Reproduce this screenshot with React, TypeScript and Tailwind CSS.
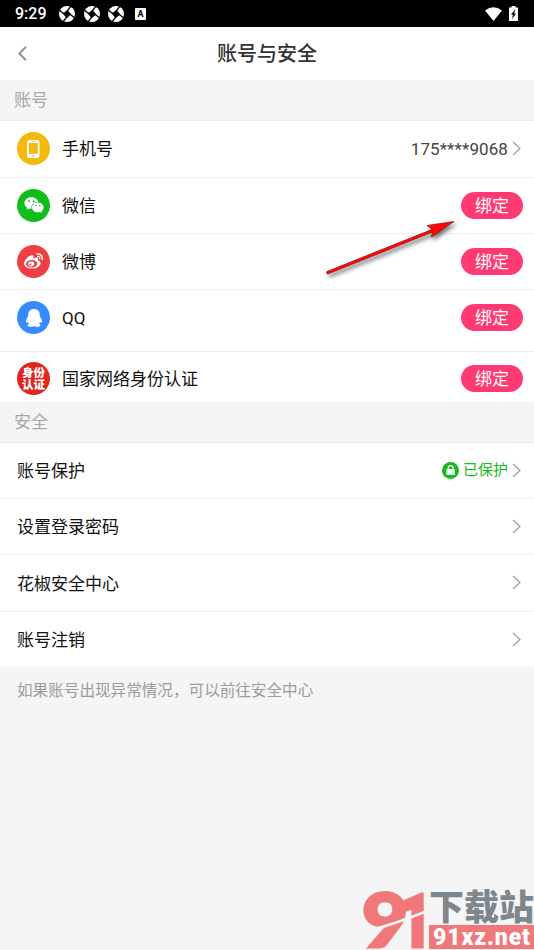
import type { ReactNode } from "react";
import { FaWeibo } from "react-icons/fa";
import { AiFillWechat } from "react-icons/ai";

const ApertureIcon = () => (
  <svg viewBox="0 0 16 16" className="w-4 h-4">
    <circle cx="8" cy="8" r="8" fill="#fff" />
    {[0, 90, 180, 270].map((angle) => (
      <path key={angle} d="M8 8 3.900 7.700 8.800 3.300 11.200 0 12.400.7 9.800 4z" fill="#000" transform={`rotate(${angle} 8 8)`} />
    ))}
  </svg>
);

const StatusBar = () => (
  <div className="flex items-center h-[27px] bg-black text-white pl-[15px] pr-[14px]">
    <span className="w-[44px] text-[16px] leading-[27px] font-medium font-['Roboto',sans-serif]">9:29</span>
    <div className="flex gap-[8.5px]">
      <ApertureIcon />
      <ApertureIcon />
      <ApertureIcon />
    </div>
    <span className="ml-[11px] w-[11px] h-3 rounded-[1px] bg-white text-black text-[9px] leading-3 text-center font-bold font-['Roboto',sans-serif]">A</span>
    <svg viewBox="0 0 17 14" className="ml-auto w-[17px] h-[14px]">
      <path d="M0 3.500Q8.500-3 17 3.500L8.500 14z" fill="#fff" />
    </svg>
    <svg viewBox="0 0 9 15" className="ml-[7px] mr-[2px] w-[9px] h-[15px]">
      <path d="M2.500 0h4v1.500H9V15H0V1.500h2.500z" fill="#fff" />
      <path d="M6.500 3 2 8.500h2L3 13l4-5.500H5z" fill="#000" />
    </svg>
  </div>
);

const Chevron = () => (
  <svg viewBox="0 0 9 15" className="w-[9px] h-[15px]" fill="none" stroke="#9d9d9f" strokeWidth="1.2">
    <path d="M1 1l7 6.500-7 6.500" />
  </svg>
);

const BindButton = () => (
  <button className="w-[62px] h-[27px] pt-px rounded-full bg-[#ff3a73] text-white text-[17px] leading-[26px]">绑定</button>
);

const PhoneIcon = () => (
  <svg viewBox="0 0 13 18" className="w-[13px] h-[18px]">
    <rect width="12.500" height="18" rx="2.200" fill="#fff" />
    <rect x="1.800" y="3" width="9" height="10.800" fill="#f5b80c" />
    <path d="M4.500 1.500h3.500" stroke="#f5b80c" strokeWidth=".7" />
    <circle cx="6.300" cy="15.900" r=".9" fill="#f5b80c" />
  </svg>
);

const PenguinIcon = () => (
  <svg viewBox="0 0 16 18" className="w-4 h-[18px]" fill="#fff">
    <path d="M8 0C4.600 0 2.200 2.400 2.200 5.700v1.500C1 8.800 0 10.800.1 12.900c.1 1.200 1.200.8 1.800-.2.300.9.600 1.500 1.200 2.100-1 .4-1.500.9-1.500 1.500 0 1.400 2.400 1.800 4.200 1.500 1-.1 1.700-.5 2.200-.9.500.4 1.200.8 2.200.9 1.800.3 4.200-.1 4.200-1.500 0-.6-.5-1.100-1.500-1.500.6-.6.9-1.200 1.200-2.100.6 1 1.700 1.400 1.800.2.100-2.100-.9-4.100-2.100-5.700V5.700C13.800 2.400 11.400 0 8 0z" />
  </svg>
);

const LockBadge = () => (
  <svg viewBox="0 0 17 17" className="w-[17px] h-[17px]">
    <circle cx="8.500" cy="8.500" r="8.500" fill="#11bd19" />
    <rect x="4.300" y="7" width="8.600" height="5.800" rx=".6" fill="#fff" />
    <path d="M6.200 7.500V6a2.400 2.400 0 0 1 4.800 0v1.500" fill="none" stroke="#fff" strokeWidth="1.300" />
  </svg>
);

const SectionTitle = ({ children }: { children: ReactNode }) => (
  <div className="h-[41px] bg-[#f5f5f5] border-b border-[#ebebeb] pl-[14px] text-[17px] leading-[41px] text-[#a7a7aa]">{children}</div>
);

const AccountRow = ({ icon, color, label, className, children }: {
  icon: ReactNode;
  color: string;
  label: string;
  className: string;
  children: ReactNode;
}) => (
  <div className={`flex items-center pl-[17px] pr-[11px] bg-white border-[#efefef] ${className}`}>
    <div className={`flex items-center justify-center w-[33px] h-[33px] rounded-full text-white ${color}`}>{icon}</div>
    <span className="ml-3 pt-px text-[17px] leading-6 text-[#111]">{label}</span>
    <div className="ml-auto flex items-center">{children}</div>
  </div>
);

const SafetyRow = ({ label, className, children }: { label: string; className: string; children?: ReactNode }) => (
  <div className={`flex items-center pl-[17px] pr-[13px] bg-white border-[#efefef] text-[17px] text-[#111] ${className}`}>
    <span className="pt-[3px]">{label}</span>
    <div className="ml-auto flex items-center pb-px">
      {children}
      <Chevron />
    </div>
  </div>
);

const Arrow = () => (
  <svg viewBox="0 0 140 66" className="absolute left-[322px] top-[216px] w-[140px] h-[66px] pointer-events-none overflow-visible">
    <g className="[filter:drop-shadow(2px_3px_2px_rgba(0,0,0,0.55))]">
      <path d="M6 56.500 112 14" stroke="#8a2020" strokeWidth="3.400" strokeLinecap="round" />
      <path d="M105 9.500 132 5.500 109.500 21 111 14z" fill="#fa0808" stroke="#8a2020" strokeWidth=".8" />
      <path d="M7 56.100 113 13.700" stroke="#fa0808" strokeWidth="2.500" strokeLinecap="round" />
    </g>
  </svg>
);

const Watermark = () => (
  <div className="absolute right-0 bottom-0 flex w-[171px] h-[60px]">
    <svg viewBox="0 0 66 60" className="w-[66px] h-[60px]">
      <g fill="#f0787b" stroke="#f0787b" strokeWidth="3" fontWeight="900">
        <text transform="translate(-1 57) scale(1.060 1)" fontSize="75" fontFamily="Lato, sans-serif">9</text>
        <text transform="translate(35 57) scale(.8 1)" fontSize="75" fontFamily="Roboto, sans-serif">1</text>
      </g>
      <path d="M5 41Q35 33 64 21" fill="none" stroke="#f5f5f5" strokeWidth="2.500" />
    </svg>
    <div className="flex flex-col w-[105px]">
      <span className="h-[35px] text-[35px] leading-[38px] font-black text-[#7d878d] whitespace-nowrap">下载站</span>
      <svg viewBox="0 0 105 24" className="w-[105px] h-6 bg-[#f0787b]">
        <text x="4" y="20" fontSize="23" fontWeight="900" fill="#fff" fontFamily="Roboto, sans-serif" textLength="97">91xz.net</text>
      </svg>
    </div>
  </div>
);

const App = () => {
  return (
    <div className="relative w-[534px] h-[950px] overflow-hidden bg-[#f5f5f5] font-['Roboto','Noto_Sans_CJK_SC',sans-serif]">
      <StatusBar />
      <header className="grid grid-cols-[1fr_auto_1fr] items-center h-[53px] bg-white">
        <svg viewBox="0 0 9 15" className="ml-[18px] w-[9px] h-[15px]" fill="none" stroke="#929292" strokeWidth="2">
          <path d="M8 .8 1.300 7.500 8 14.200" />
        </svg>
        <h1 className="text-[20px] font-medium text-[#333]">账号与安全</h1>
      </header>

      <SectionTitle>账号</SectionTitle>
      <AccountRow icon={<PhoneIcon />} color="bg-[#f5b80c]" label="手机号" className="h-[57px] pb-px border-b">
        <span className="mr-1 pt-[2px] text-[17px] tracking-[0.1px] text-[#444]">175****9068</span>
        <div className="mr-[2px]"><Chevron /></div>
      </AccountRow>
      <AccountRow icon={<AiFillWechat size={22} />} color="bg-[#11bd19]" label="微信" className="h-14 pb-px border-b">
        <BindButton />
      </AccountRow>
      <AccountRow icon={<FaWeibo size={19} />} color="bg-[#ee4044]" label="微博" className="h-14 border-b">
        <BindButton />
      </AccountRow>
      <AccountRow icon={<PenguinIcon />} color="bg-[#388bff]" label="QQ" className="h-[62px] pb-[6px] border-b">
        <BindButton />
      </AccountRow>
      <AccountRow
        icon={<span className="w-6 text-[11.5px] leading-[12px] font-black text-center">身份认证</span>}
        color="bg-[#e1261f]"
        label="国家网络身份认证"
        className="h-[50px] pt-[3px]"
      >
        <BindButton />
      </AccountRow>

      <SectionTitle>安全</SectionTitle>
      <SafetyRow label="账号保护" className="h-14 border-b">
        <LockBadge />
        <span className="ml-1 mr-1 pt-px text-[15px] text-[#11bd19]">已保护</span>
      </SafetyRow>
      <SafetyRow label="设置登录密码" className="h-14 border-b" />
      <SafetyRow label="花椒安全中心" className="h-[57px] border-b" />
      <SafetyRow label="账号注销" className="h-[55px]" />
      <p className="pl-[17px] text-[15.6px] leading-[48px] text-[#9c9c9c]">如果账号出现异常情况，可以前往安全中心</p>

      <Arrow />
      <Watermark />
    </div>
  );
};

export default App;
